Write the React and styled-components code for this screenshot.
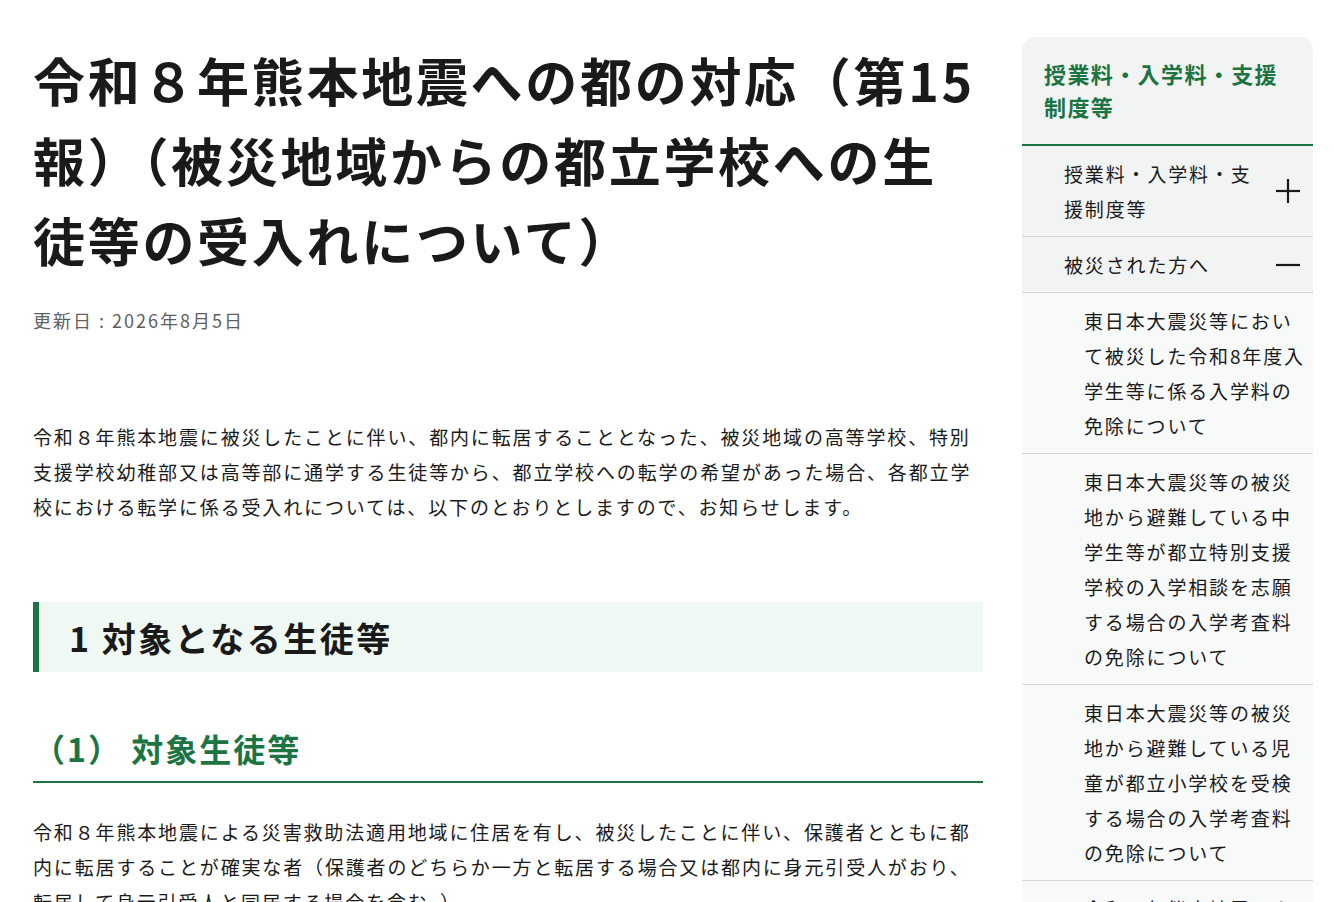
import React from "react";
import styled, { createGlobalStyle } from "styled-components";

const GREEN = "#1b7442";
const TEXT = "#1a1a1a";

const GlobalStyle = createGlobalStyle`
  html, body {
    margin: 0;
    padding: 0;
    background: #ffffff;
  }
  body {
    font-family: "Noto Sans CJK JP", "Noto Sans", sans-serif;
    color: ${TEXT};
  }
  * { box-sizing: border-box; }
`;

const Page = styled.div`
  display: flex;
  align-items: flex-start;
  gap: 39px;
  padding: 37px 21px 0 33px;
  height: 902px;
  overflow: hidden;
`;

const Main = styled.main`
  width: 950px;
  flex: none;
  padding-top: 3px;
`;

const Title = styled.h1`
  margin: 0;
  font-size: 52px;
  font-weight: 700;
  line-height: 80px;
  letter-spacing: 2.7px;
  color: ${TEXT};
`;

const DateLine = styled.p`
  margin: 26px 0 0;
  font-size: 18px;
  line-height: 29px;
  letter-spacing: 2px;
  color: #5f5f5f;
`;

const Paragraph = styled.p`
  margin: ${(p) => p.$top}px 0 0;
  font-size: 19px;
  line-height: 35px;
  letter-spacing: 1.85px;
  color: ${TEXT};
`;

const SectionHeading = styled.h2`
  margin: 78px 0 0;
  height: 70px;
  display: flex;
  align-items: center;
  padding: 0 30px;
  background: #eff8f3;
  border-left: 6px solid ${GREEN};
  font-size: 34px;
  font-weight: 700;
  letter-spacing: 2.5px;
  color: ${TEXT};
`;

const SubHeading = styled.h3`
  margin: 52px 0 0;
  padding-bottom: 9px;
  border-bottom: 2px solid ${GREEN};
  font-size: 32px;
  font-weight: 700;
  line-height: 48px;
  letter-spacing: 2px;
  color: ${GREEN};
`;

const Side = styled.nav`
  width: 291px;
  flex: none;
`;

const SideHeader = styled.div`
  padding: 20px 22px 21px;
  background: #f2f3f3;
  border-radius: 14px 14px 0 0;
  border-bottom: 2px solid ${GREEN};
  font-size: 22px;
  font-weight: 700;
  line-height: 33px;
  letter-spacing: 1.4px;
  color: ${GREEN};
`;

const NavItem = styled.div`
  display: flex;
  align-items: center;
  gap: 12px;
  padding: 10px 13px 10px 42px;
  background: #f2f3f3;
  border-bottom: 1px solid #d6d6d6;
`;

const NavText = styled.span`
  flex: 1;
  font-size: 19px;
  line-height: 35px;
  letter-spacing: 1.85px;
  color: ${TEXT};
`;

const SubItem = styled.div`
  padding: 10px 4px 10px 62px;
  background: #f8f9f9;
  border-bottom: 1px solid #d6d6d6;
  font-size: 19px;
  line-height: 35px;
  letter-spacing: 1.85px;
  color: ${TEXT};
`;

const Toggle = ({ open }) => (
  <svg width="24" height="24" viewBox="0 0 24 24" style={{ flex: "none" }}>
    <line x1="0" y1="12" x2="24" y2="12" stroke={TEXT} strokeWidth="2.2" />
    {!open && (
      <line x1="12" y1="0" x2="12" y2="24" stroke={TEXT} strokeWidth="2.2" />
    )}
  </svg>
);

const subItems = [
  "東日本大震災等において被災した令和8年度入学生等に係る入学料の免除について",
  "東日本大震災等の被災地から避難している中学生等が都立特別支援学校の入学相談を志願する場合の入学考査料の免除について",
  "東日本大震災等の被災地から避難している児童が都立小学校を受検する場合の入学考査料の免除について",
  "令和８年熊本地震により被災した生徒等の入学料等の免除について",
];

export default function App() {
  return (
    <>
      <GlobalStyle />
      <Page>
        <Main>
          <Title>
            令和８年熊本地震への都の対応（第15報）（被災地域からの都立学校への生徒等の受入れについて）
          </Title>
          <DateLine>更新日 : 2026年8月5日</DateLine>
          <Paragraph $top={84}>
            令和８年熊本地震に被災したことに伴い、都内に転居することとなった、被災地域の高等学校、特別支援学校幼稚部又は高等部に通学する生徒等から、都立学校への転学の希望があった場合、各都立学校における転学に係る受入れについては、以下のとおりとしますので、お知らせします。
          </Paragraph>
          <SectionHeading>1 対象となる生徒等</SectionHeading>
          <SubHeading>（1） 対象生徒等</SubHeading>
          <Paragraph $top={31}>
            令和８年熊本地震による災害救助法適用地域に住居を有し、被災したことに伴い、保護者とともに都内に転居することが確実な者（保護者のどちらか一方と転居する場合又は都内に身元引受人がおり、転居して身元引受人と同居する場合を含む。）
          </Paragraph>
        </Main>
        <Side>
          <SideHeader>授業料・入学料・支援制度等</SideHeader>
          <NavItem>
            <NavText>授業料・入学料・支援制度等</NavText>
            <Toggle open={false} />
          </NavItem>
          <NavItem>
            <NavText>被災された方へ</NavText>
            <Toggle open />
          </NavItem>
          {subItems.map((t) => (
            <SubItem key={t}>{t}</SubItem>
          ))}
        </Side>
      </Page>
    </>
  );
}
